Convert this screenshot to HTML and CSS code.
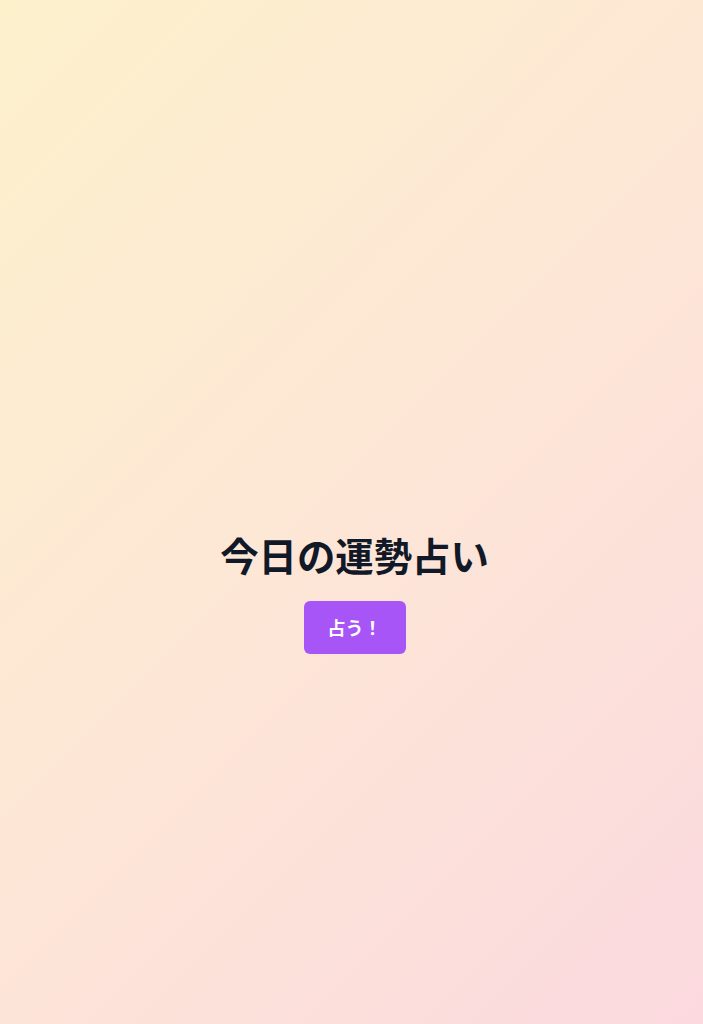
FILE: index.html
```html
<!DOCTYPE html>
<html lang="ja">
<head>
<meta charset="utf-8">
<title>今日の運勢占い</title>
<link rel="stylesheet" href="styles.css">
</head>
<body>
<main class="page">
  <h1 class="title">今日の運勢占い</h1>
  <button class="btn" type="button">占う！</button>
</main>
</body>
</html>
```
FILE: styles.css
```css
html, body {
  margin: 0;
  padding: 0;
}
body {
  font-family: "Noto Sans CJK JP", "Noto Sans", sans-serif;
}
.page {
  min-height: 100vh;
  box-sizing: border-box;
  padding-top: 164px;
  padding-left: 6px;
  display: flex;
  flex-direction: column;
  align-items: center;
  justify-content: center;
  background: linear-gradient(135deg, #fdf1cc 0%, #fde6d6 50%, #fbd9df 100%);
}
.title {
  margin: 0 0 28px;
  font-size: 38.4px;
  line-height: 38px;
  font-weight: 700;
  color: #111827;
}
.btn {
  font-family: inherit;
  font-size: 18px;
  line-height: 29px;
  font-weight: 700;
  color: #fff;
  background: #a855f7;
  border: none;
  border-radius: 6px;
  padding: 12px 24px;
  cursor: pointer;
}
```
